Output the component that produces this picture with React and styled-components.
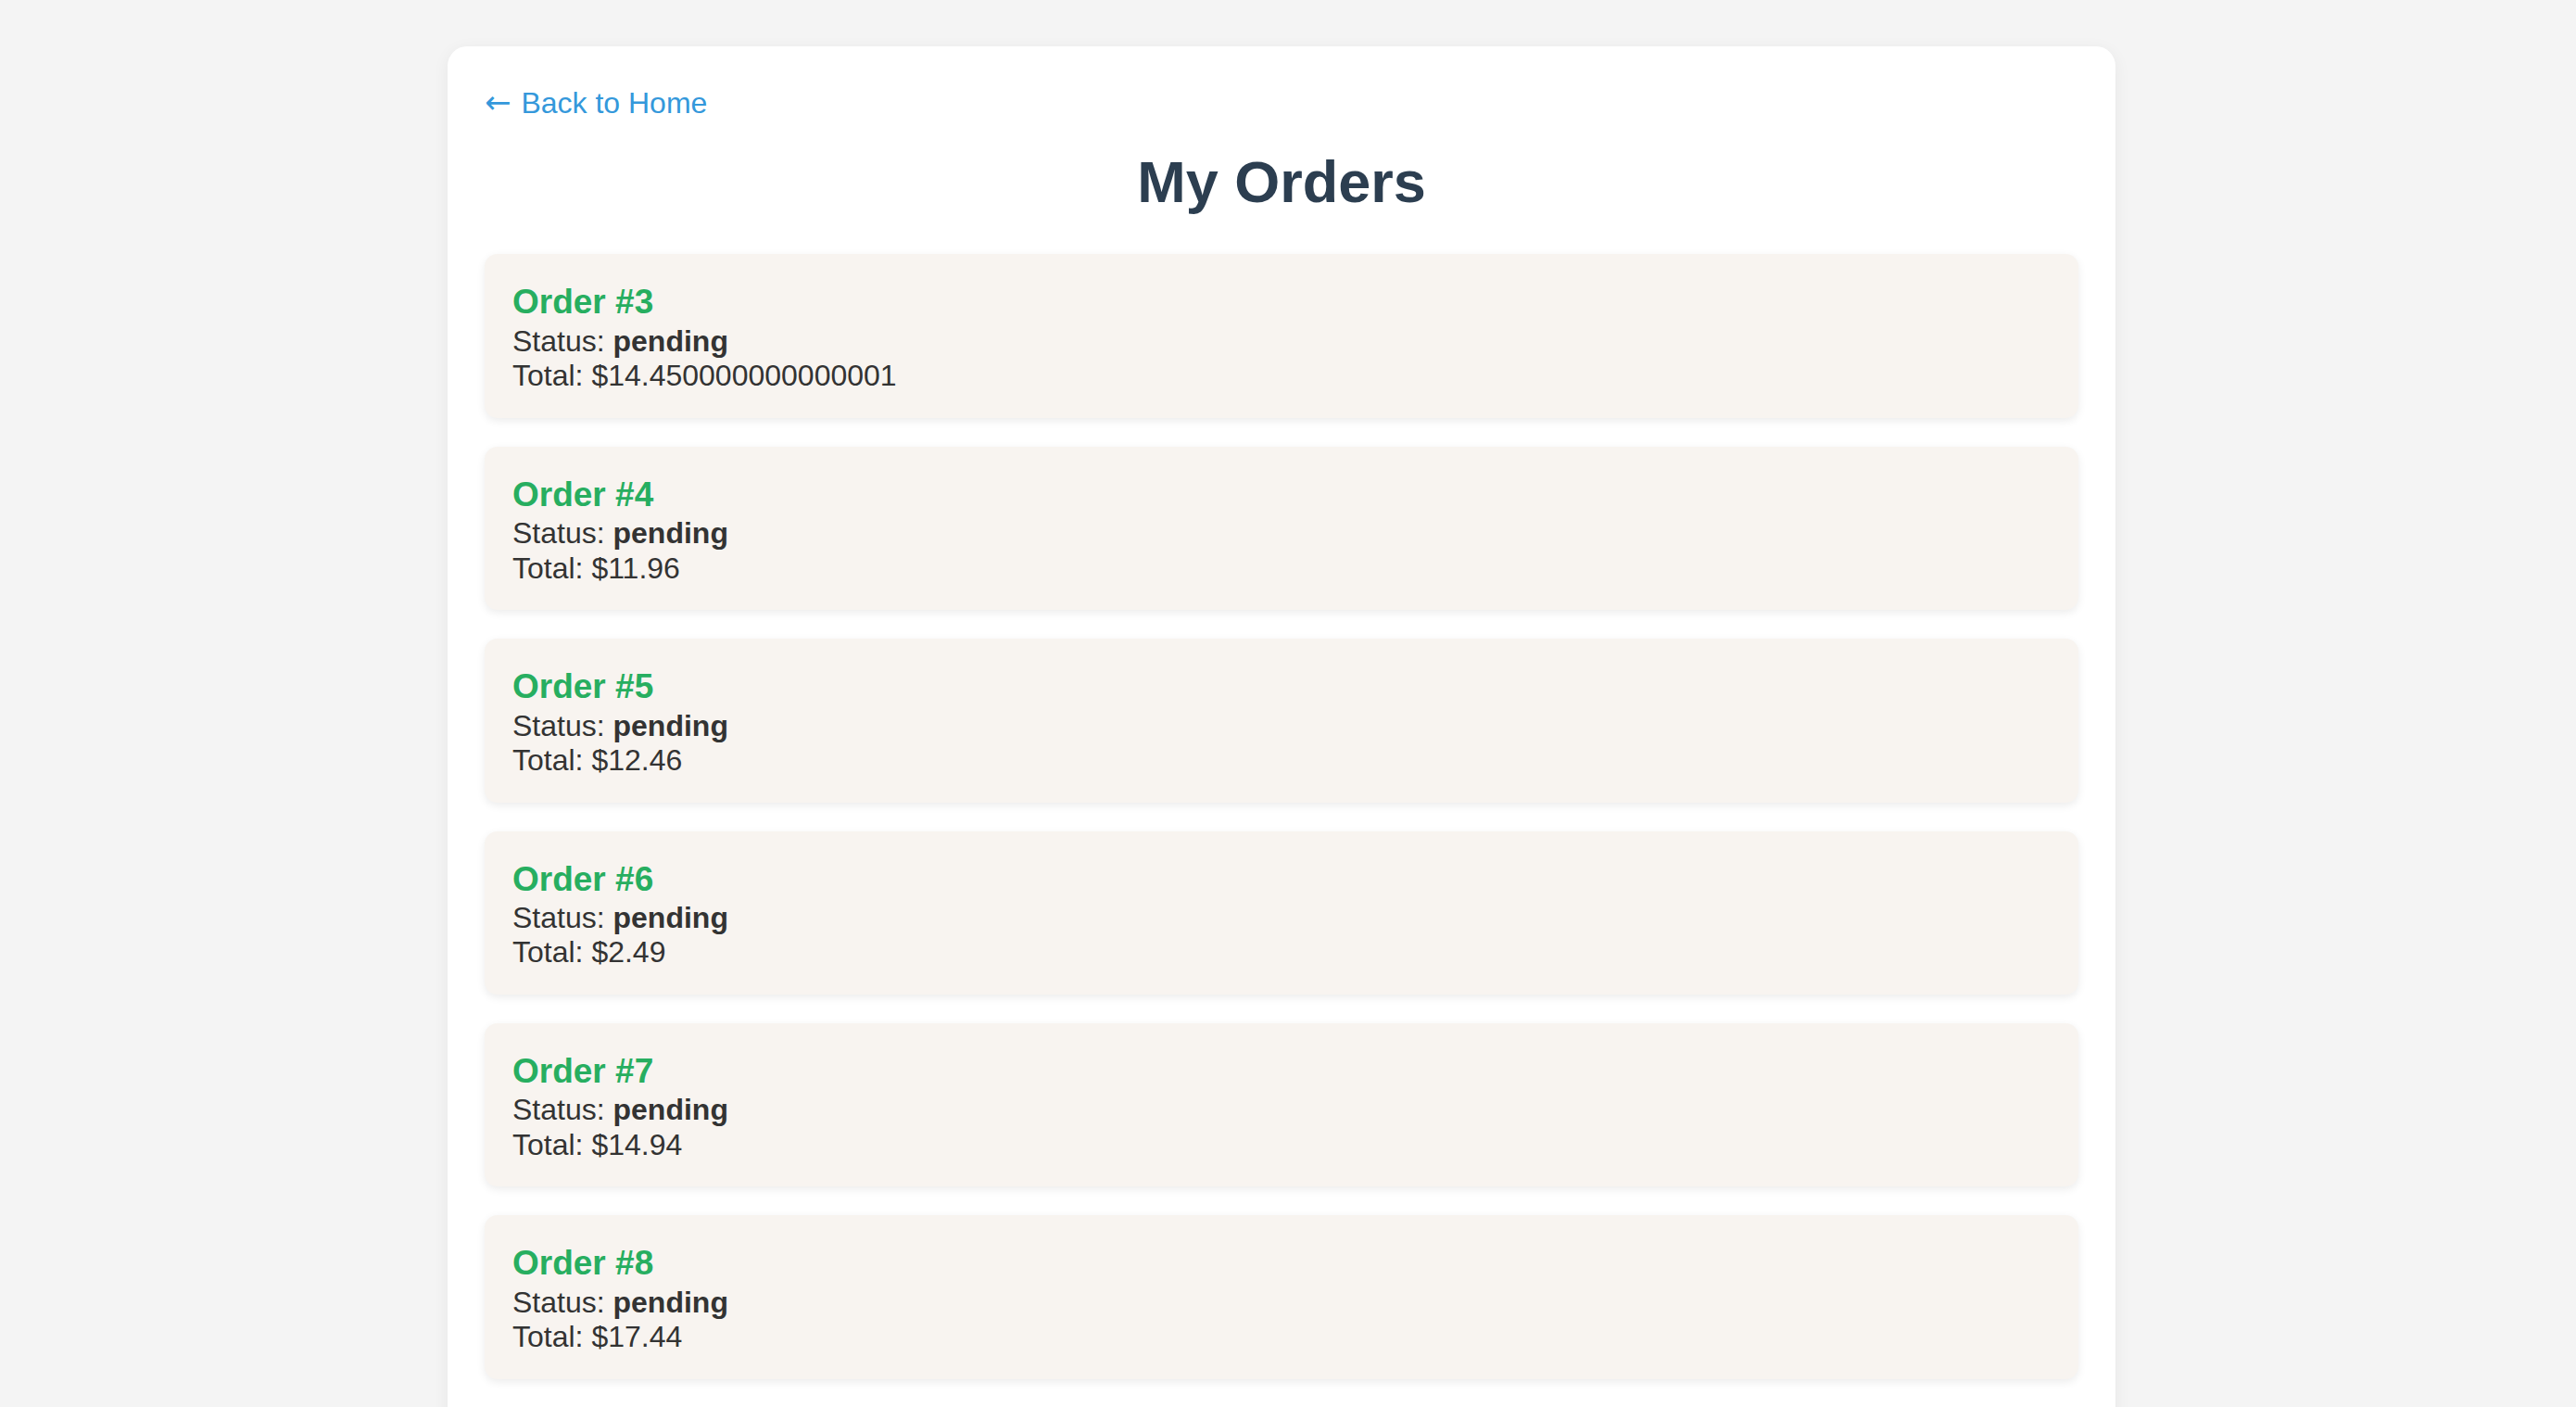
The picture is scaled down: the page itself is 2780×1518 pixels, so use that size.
import React from 'react'
import styled, { createGlobalStyle } from 'styled-components'

const GlobalStyle = createGlobalStyle`
  body {
    margin: 0;
    background: #f4f4f4;
    font-family: "Liberation Sans", Arial, sans-serif;
    color: #333;
  }
`

const Container = styled.div`
  width: 1800px;
  margin: 50px 0 0 483px;
  padding: 43px 40px 60px;
  box-sizing: border-box;
  background: #fff;
  border-radius: 21px;
  box-shadow: 0 4px 18px rgba(0, 0, 0, 0.06);
`

const BackLink = styled.a`
  display: inline-block;
  color: #3498db;
  font-size: 32px;
  line-height: 1.15;
  text-decoration: none;
  cursor: pointer;
`

const Arrow = styled.span`
  font-family: "DejaVu Sans", sans-serif;
  font-size: 34px;
  line-height: 1;
  margin-right: 2px;
`

const Title = styled.h1`
  margin: 30px 0 42px;
  text-align: center;
  color: #2c3e50;
  font-size: 63px;
  font-weight: 700;
  line-height: 1.15;
`

const OrderList = styled.div`
  display: flex;
  flex-direction: column;
  gap: 31px;
`

const OrderCard = styled.div`
  background: #f8f4f0;
  border-radius: 14px;
  padding: 31px 30px 26px;
  box-shadow: 0 3px 10px rgba(0, 0, 0, 0.08);
`

const OrderTitle = styled.h3`
  margin: 0 0 2px;
  color: #27ae60;
  font-size: 37px;
  font-weight: 700;
  line-height: 1.15;
`

const OrderLine = styled.p`
  margin: 0;
  font-size: 32px;
  line-height: 1.17;
  color: #333;

  strong {
    font-weight: 700;
  }
`

const orders = [
  { id: 3, status: 'pending', total: '14.450000000000001' },
  { id: 4, status: 'pending', total: '11.96' },
  { id: 5, status: 'pending', total: '12.46' },
  { id: 6, status: 'pending', total: '2.49' },
  { id: 7, status: 'pending', total: '14.94' },
  { id: 8, status: 'pending', total: '17.44' },
]

function App() {
  return (
    <>
      <GlobalStyle />
      <Container>
        <BackLink>
          <Arrow>←</Arrow> Back to Home
        </BackLink>
        <Title>My Orders</Title>
        <OrderList>
          {orders.map((o) => (
            <OrderCard key={o.id}>
              <OrderTitle>Order #{o.id}</OrderTitle>
              <OrderLine>
                Status: <strong>{o.status}</strong>
              </OrderLine>
              <OrderLine>Total: ${o.total}</OrderLine>
            </OrderCard>
          ))}
        </OrderList>
      </Container>
    </>
  )
}

export default App
